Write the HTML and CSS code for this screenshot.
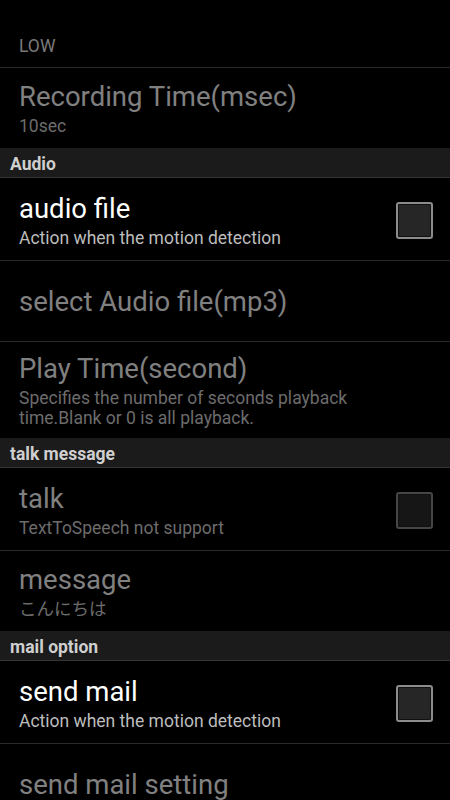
FILE: index.html
```html
<!DOCTYPE html>
<html lang="en">
<head>
<meta charset="utf-8">
<title>Preferences</title>
<link rel="stylesheet" href="styles.css">
</head>
<body>
<div class="list">
  <div class="pref pref-top">
    <div class="summary disabled">LOW</div>
  </div>
  <div class="pref">
    <div class="text">
      <div class="title disabled">Recording Time(msec)</div>
      <div class="summary disabled">10sec</div>
    </div>
  </div>

  <div class="header">Audio</div>
  <div class="pref pref-check">
    <div class="text">
      <div class="title">audio file</div>
      <div class="summary">Action when the motion detection</div>
    </div>
    <div class="check"></div>
  </div>
  <div class="pref">
    <div class="text">
      <div class="title disabled">select Audio file(mp3)</div>
    </div>
  </div>
  <div class="pref">
    <div class="text">
      <div class="title disabled">Play Time(second)</div>
      <div class="summary disabled">Specifies the number of seconds playback<br>time.Blank or 0 is all playback.</div>
    </div>
  </div>

  <div class="header">talk message</div>
  <div class="pref pref-check">
    <div class="text">
      <div class="title disabled">talk</div>
      <div class="summary disabled">TextToSpeech not support</div>
    </div>
    <div class="check check-disabled"></div>
  </div>
  <div class="pref">
    <div class="text">
      <div class="title disabled">message</div>
      <div class="summary disabled">こんにちは</div>
    </div>
  </div>

  <div class="header">mail option</div>
  <div class="pref pref-check">
    <div class="text">
      <div class="title">send mail</div>
      <div class="summary">Action when the motion detection</div>
    </div>
    <div class="check"></div>
  </div>
  <div class="pref">
    <div class="text">
      <div class="title disabled">send mail setting</div>
    </div>
  </div>
</div>
</body>
</html>
```

FILE: styles.css
```css
html, body {
  margin: 0;
  padding: 0;
  background: #000;
  width: 450px;
  height: 800px;
  overflow: hidden;
}

body {
  font-family: Roboto, "Noto Sans CJK JP", sans-serif;
  color: #fff;
}

.list {
  display: flex;
  flex-direction: column;
}

.pref {
  display: flex;
  align-items: center;
  box-sizing: content-box;
  min-height: 59px;
  padding: 11px 17px 10px 19px;
}

.pref + .pref {
  border-top: 1px solid #2a2a2a;
}

.pref-top {
  min-height: 0;
  padding-top: 36px;
  padding-bottom: 11px;
}

.pref-check {
  min-height: 61px;
  padding-top: 12px;
  padding-bottom: 9px;
}

.text {
  flex: 1;
  min-width: 0;
}

.title {
  font-size: 27.5px;
  line-height: 32px;
  color: #ffffff;
  white-space: nowrap;
}

.title + .summary {
  margin-top: 3px;
}

.summary {
  font-size: 17.5px;
  line-height: 20px;
  color: #bdbdbd;
}

.title.disabled {
  color: #808080;
}

.summary.disabled {
  color: #6c6c6c;
}

.pref-top .summary.disabled {
  color: #7a7a7a;
}

.header {
  box-sizing: border-box;
  height: 30px;
  padding: 3px 10px 0;
  background: #1b1b1b;
  border-bottom: 1px solid #353535;
  font-size: 17.5px;
  font-weight: bold;
  line-height: 26px;
  color: #cfcfcf;
}

.check {
  box-sizing: border-box;
  width: 37px;
  height: 37px;
  margin-left: 12px;
  flex: none;
  border: 2px solid #8c8c8c;
  border-radius: 3px;
  background: #262626;
  box-shadow: inset 0 0 0 1px #111;
}

.check-disabled {
  border-color: #464646;
  background: #161616;
}
```
